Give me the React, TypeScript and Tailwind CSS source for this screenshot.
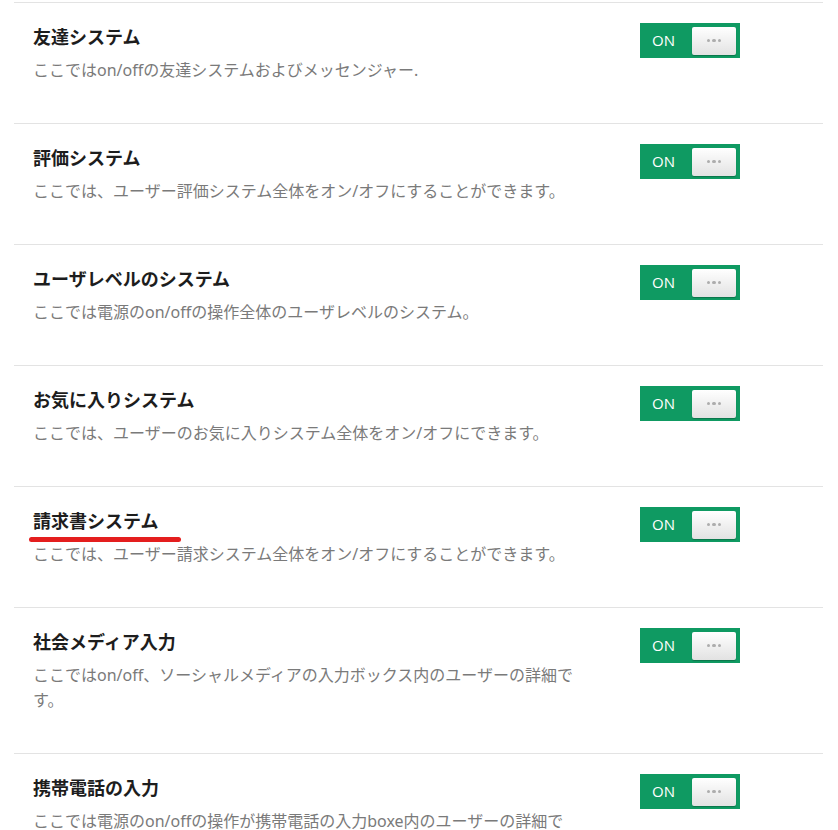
import React from "react";

type Item = { title: string; desc: string; mark?: boolean; narrow?: boolean };

const items: Item[] = [
  { title: "友達システム", desc: "ここではon/offの友達システムおよびメッセンジャー." },
  { title: "評価システム", desc: "ここでは、ユーザー評価システム全体をオン/オフにすることができます。" },
  { title: "ユーザレベルのシステム", desc: "ここでは電源のon/offの操作全体のユーザレベルのシステム。" },
  { title: "お気に入りシステム", desc: "ここでは、ユーザーのお気に入りシステム全体をオン/オフにできます。" },
  { title: "請求書システム", desc: "ここでは、ユーザー請求システム全体をオン/オフにすることができます。", mark: true },
  { title: "社会メディア入力", desc: "ここではon/off、ソーシャルメディアの入力ボックス内のユーザーの詳細です。" },
  { title: "携帯電話の入力", desc: "ここでは電源のon/offの操作が携帯電話の入力boxe内のユーザーの詳細です。", narrow: true },
];

function Toggle() {
  return (
    <div className="flex h-[35px] w-[100px] items-center bg-[#0f9a62] pl-[12px] pr-[4px]">
      <span className="w-[40px] text-[15px] font-medium text-white" style={{ fontFamily: "'Open Sans', 'Noto Sans', sans-serif" }}>
        ON
      </span>
      <div className="flex h-[28px] w-[44px] items-center justify-center gap-[2px] rounded-[2px] bg-gradient-to-b from-[#ffffff] to-[#e2e2e2] shadow-[0_1px_1px_rgba(0,0,0,0.25)]">
        <span className="h-[3.5px] w-[3.5px] rounded-full bg-[#adadad]" />
        <span className="h-[3.5px] w-[3.5px] rounded-full bg-[#adadad]" />
        <span className="h-[3.5px] w-[3.5px] rounded-full bg-[#adadad]" />
      </div>
    </div>
  );
}

export default function App() {
  return (
    <div
      className="h-[830px] w-[838px] overflow-hidden bg-white pl-[14px] pr-[15px] pt-[2px]"
      style={{ fontFamily: "'Noto Sans', 'Noto Sans CJK JP', sans-serif" }}
    >
      {items.map((it, i) => (
        <div key={i} className="flex border-t border-[#e3e3e3] pb-[40px] pl-[19px] pt-[20px]">
          <div className="w-[562px]">
            <div className="relative inline-block">
              <h3 className="text-[18px] font-bold leading-[28px] text-[#1d1d1d]">{it.title}</h3>
              {it.mark && (
                <div className="absolute left-[-4px] top-[30px] h-[5px] w-[152px] rounded-full bg-[#e41e1e]" />
              )}
            </div>
            <p
              className={
                it.narrow
                  ? "mt-[7px] w-[550px] text-[16px] leading-[25px] text-[#7a7a7a]"
                  : "mt-[7px] text-[16px] leading-[25px] text-[#7a7a7a]"
              }
            >
              {it.desc}
            </p>
          </div>
          <div className="ml-[45px]">
            <Toggle />
          </div>
        </div>
      ))}
    </div>
  );
}
